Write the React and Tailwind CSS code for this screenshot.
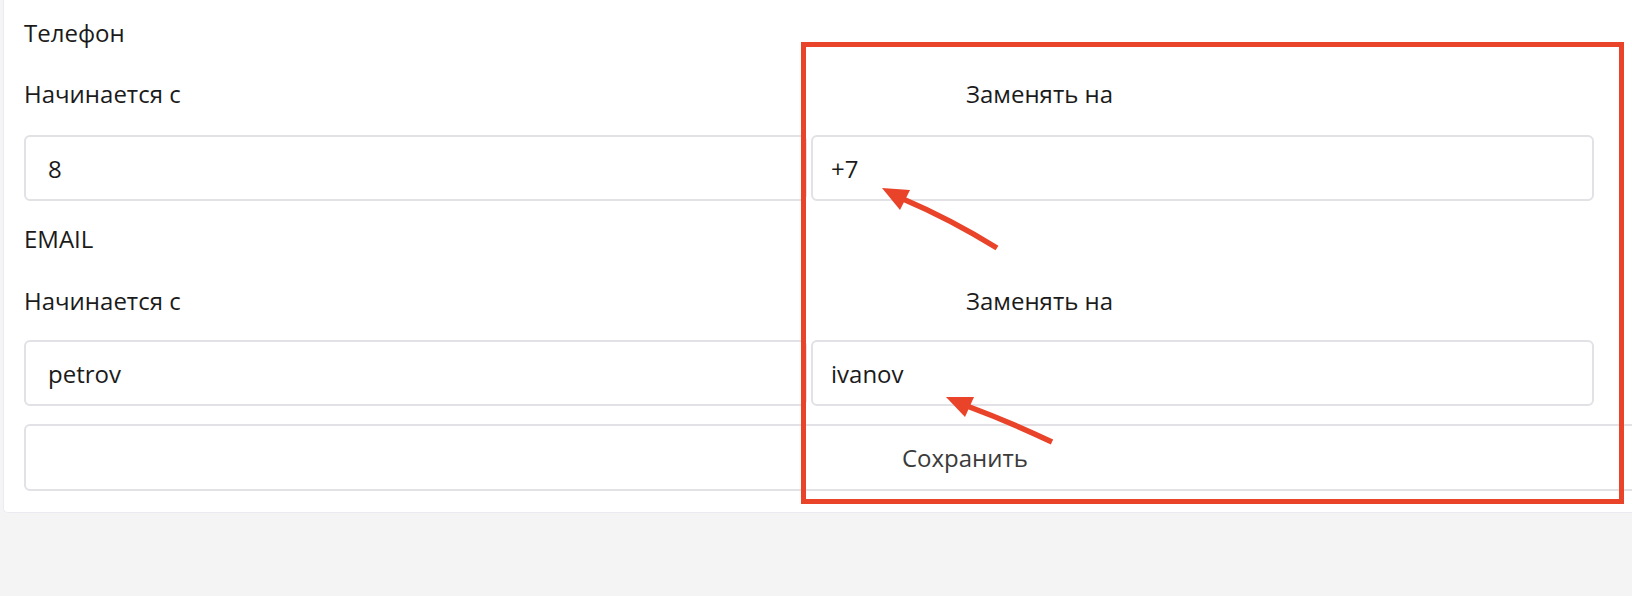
import { useState } from "react";

// Annotated "replace prefix" settings form: phone + email rules
const rules = [
  { title: "Телефон", from: "8", to: "+7", gapTop: "mt-[25px]", gapInputs: "gap-y-[23px]" },
  { title: "EMAIL", from: "petrov", to: "ivanov", gapTop: "mt-[26px]", gapInputs: "gap-y-[21px]" },
];

function Arrow({ shaft, head }) {
  return (
    <g>
      <path d={shaft} fill="none" stroke="#e9432a" strokeWidth="5.5" />
      <polygon points={head} fill="#e9432a" />
    </g>
  );
}

export default function App() {
  const [values, setValues] = useState(rules.map((r) => ({ from: r.from, to: r.to })));

  const update = (i, key, v) => {
    setValues((prev) => prev.map((item, idx) => (idx === i ? { ...item, [key]: v } : item)));
  };

  return (
    <div className="relative h-[596px] w-full overflow-hidden bg-[#f4f4f4] font-['Open_Sans',sans-serif] text-[24px] leading-[36px] text-[#1b1b1b]">
      <div className="ml-[3px] w-[1920px] rounded-b-[5px] border border-t-0 border-[#e9ebf0] bg-white pb-[21px] pl-[20px] pt-[15px]">
        {rules.map((rule, i) => (
          <div key={rule.title} className={i > 0 ? "mt-[20px]" : ""}>
            <p>{rule.title}</p>
            <div className={`${rule.gapTop} grid w-[1570px] grid-cols-2 gap-x-[4px] ${rule.gapInputs}`}>
              <label>Начинается с</label>
              <label className="pl-[155px]">Заменять на</label>
              <input
                value={values[i].from}
                onChange={(e) => update(i, "from", e.target.value)}
                className="h-[66px] rounded-[6px] border-2 border-[#e1e1e6] bg-white pl-[22px] text-[#1b1b1b] outline-none"
              />
              <input
                value={values[i].to}
                onChange={(e) => update(i, "to", e.target.value)}
                className="h-[66px] rounded-[6px] border-2 border-[#e1e1e6] bg-white pl-[18px] text-[#1b1b1b] outline-none"
              />
            </div>
          </div>
        ))}
        <button className="mt-[18px] h-[67px] w-[1882px] rounded-[6px] border-2 border-[#e1e1e6] bg-white text-[#3b3b3b]">
          Сохранить
        </button>
      </div>

      {/* highlight frame + pointers */}
      <div className="pointer-events-none absolute left-[801px] top-[42px] h-[462px] w-[823px] border-[5px] border-[#e9432a]" />
      <svg className="pointer-events-none absolute left-0 top-0" width="1632" height="596" viewBox="0 0 1632 596">
        <Arrow shaft="M997 248 Q950 219 903 199" head="882,188 910,190 900,210" />
        <Arrow shaft="M1052 442 Q1010 422 967 406" head="946,397 974,397 965,417" />
      </svg>
    </div>
  );
}
